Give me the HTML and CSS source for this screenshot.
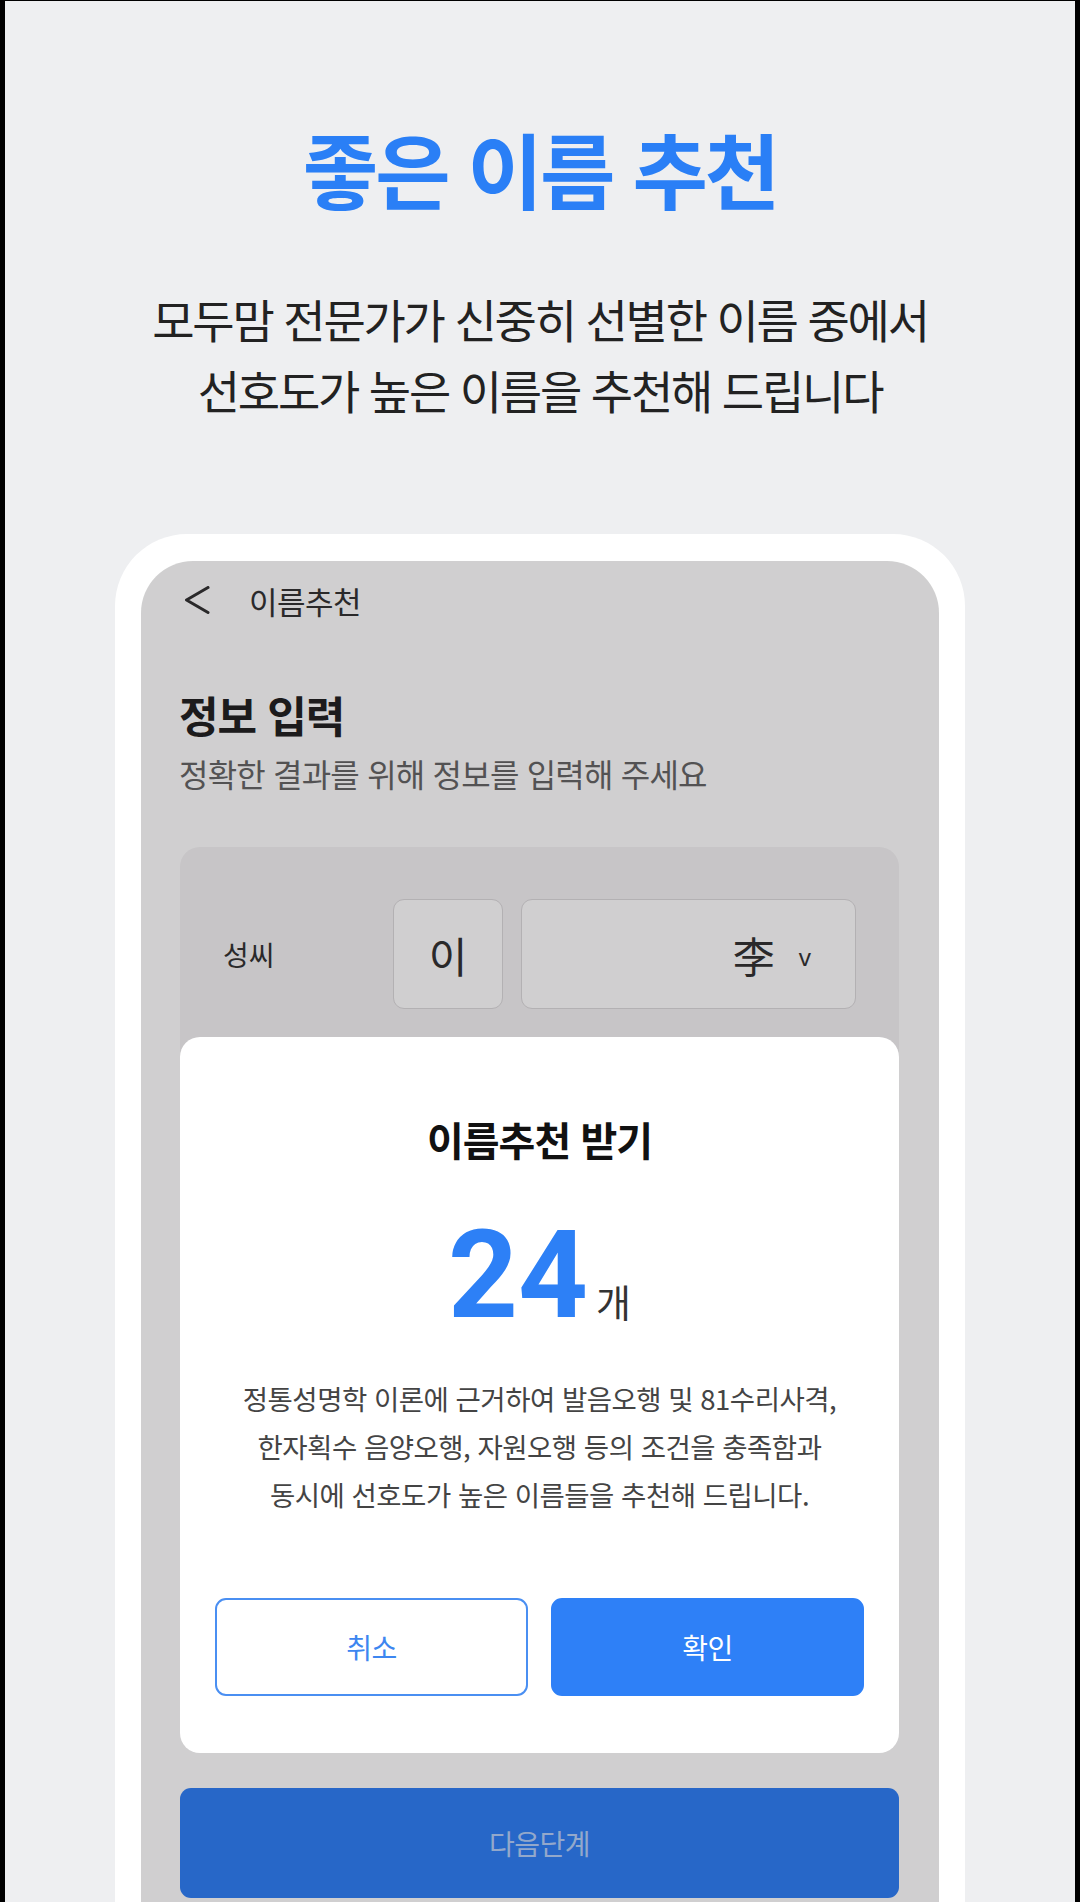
FILE: index.html
```html
<!DOCTYPE html>
<html lang="ko">
<head>
<meta charset="utf-8">
<title>좋은 이름 추천</title>
<link rel="stylesheet" href="styles.css">
</head>
<body>
<div class="page">
  <h1 class="hero-title">좋은 이름 추천</h1>
  <p class="hero-sub">모두맘 전문가가 신중히 선별한 이름 중에서<br>선호도가 높은 이름을 추천해 드립니다</p>
  <div class="phone">
    <div class="screen">
      <div class="appbar">
        <svg class="back-icon" viewBox="0 0 26 28" width="26" height="28" aria-hidden="true">
          <path d="M24 1.5 L2.5 14 L24 26.5" fill="none" stroke="#333" stroke-width="3" stroke-linecap="round" stroke-linejoin="round"/>
        </svg>
        <span class="appbar-title">이름추천</span>
      </div>
      <h2 class="sec-title">정보 입력</h2>
      <p class="sec-sub">정확한 결과를 위해 정보를 입력해 주세요</p>
      <div class="form-panel">
        <div class="form-row">
          <span class="form-label">성씨</span>
          <div class="field field-hangul">이</div>
          <div class="field field-hanja"><span class="hanja">李</span><span class="caret">v</span></div>
        </div>
      </div>
      <button class="btn-next" type="button">다음단계</button>
      <div class="dim"></div>
      <div class="modal">
        <h3 class="modal-title">이름추천 받기</h3>
        <div class="modal-count"><span class="count-num">24</span><span class="count-unit">개</span></div>
        <p class="modal-desc">정통성명학 이론에 근거하여 발음오행 및 81수리사격,<br>한자획수 음양오행, 자원오행 등의 조건을 충족함과<br>동시에 선호도가 높은 이름들을 추천해 드립니다.</p>
        <div class="modal-actions">
          <button class="btn btn-cancel" type="button">취소</button>
          <button class="btn btn-ok" type="button">확인</button>
        </div>
      </div>
    </div>
  </div>
</div>
</body>
</html>
```
FILE: styles.css
```css
* { box-sizing: border-box; }

html, body {
  margin: 0;
  padding: 0;
  background: #000;
}

body {
  font-family: "Noto Sans CJK KR", "Noto Sans", sans-serif;
}

.page {
  margin: 1px 5px 0 5px;
  height: 1901px;
  overflow: hidden;
  background: #eeeff1;
  padding-top: 117px;
}

.hero-title {
  margin: 0;
  text-align: center;
  font-size: 82px;
  line-height: 100px;
  font-weight: 700;
  letter-spacing: -3px;
  color: #2a7ff6;
}

.hero-sub {
  margin: 65px 0 0;
  text-align: center;
  font-size: 46px;
  line-height: 71px;
  font-weight: 400;
  letter-spacing: -2.2px;
  color: #222;
}

.phone {
  margin: 109px auto 0;
  width: 850px;
  height: 1400px;
  background: #fff;
  border-radius: 72px 72px 0 0;
  padding: 27px 26px 0;
}

.screen {
  position: relative;
  height: 100%;
  background: #fff;
  border-radius: 52px 52px 0 0;
  overflow: hidden;
}

.appbar {
  display: flex;
  align-items: center;
  gap: 39px;
  height: 54px;
  margin-top: 12px;
  padding-left: 43px;
}

.back-icon { display: block; }

.appbar-title {
  font-size: 31px;
  color: #333;
  letter-spacing: -0.5px;
}

.sec-title {
  margin: 61px 0 0 38px;
  font-size: 43px;
  line-height: 52px;
  font-weight: 700;
  color: #222;
  letter-spacing: -1px;
}

.sec-sub {
  margin: 13px 0 0 38px;
  font-size: 32px;
  line-height: 40px;
  letter-spacing: -0.8px;
  color: #666;
}

.form-panel {
  margin: 54px 40px 0 39px;
  height: 880px;
  background: #f4f3f4;
  border-radius: 20px;
  padding: 52px 43px 0;
}

.form-row {
  display: grid;
  grid-template-columns: 152px 110px 1fr;
  column-gap: 18px;
  align-items: center;
  height: 110px;
}

.form-label {
  font-size: 28px;
  color: #333;
}

.field {
  height: 110px;
  background: #fff;
  border: 1.5px solid #dcdadc;
  border-radius: 11px;
  display: flex;
  align-items: center;
  color: #333;
}

.field-hangul {
  justify-content: center;
  font-size: 42px;
}

.field-hanja {
  justify-content: flex-end;
  gap: 24px;
  padding-right: 44px;
}

.hanja { font-size: 42px; }

.caret {
  font-family: "Noto Sans", sans-serif;
  font-size: 24px;
  margin-top: 4px;
}

.btn-next {
  display: block;
  margin: 61px 0 0 39px;
  width: 719px;
  height: 110px;
  border: 0;
  border-radius: 11px;
  background: #2f7ff6;
  color: #b4cff9;
  font-family: inherit;
  font-size: 28px;
  letter-spacing: -0.5px;
}

.dim {
  position: absolute;
  inset: 0;
  background: rgba(4, 0, 4, 0.19);
  z-index: 1;
}

.modal {
  position: absolute;
  top: 476px;
  left: 39px;
  width: 719px;
  height: 716px;
  z-index: 2;
  background: #fff;
  border-radius: 20px;
  padding: 76px 35px 0;
  display: flex;
  flex-direction: column;
  align-items: center;
}

.modal-title {
  margin: 0;
  font-size: 40px;
  line-height: 52px;
  font-weight: 700;
  color: #111;
  letter-spacing: -1px;
}

.modal-count {
  margin-top: 51px;
  display: flex;
  align-items: baseline;
  justify-content: center;
  height: 120px;
}

.count-num {
  font-family: Roboto, "Noto Sans", sans-serif;
  font-weight: 700;
  font-size: 122px;
  line-height: 120px;
  color: #2d80f6;
}

.count-unit {
  font-size: 38px;
  color: #333;
  margin-left: 8px;
}

.modal-desc {
  margin: 38px 0 0;
  text-align: center;
  font-size: 27.5px;
  line-height: 48px;
  letter-spacing: -0.5px;
  color: #444;
}

.modal-actions {
  margin-top: 80px;
  width: 100%;
  display: grid;
  grid-template-columns: 1fr 1fr;
  column-gap: 23px;
}

.btn {
  height: 98px;
  border-radius: 11px;
  font-family: inherit;
  font-size: 28px;
  letter-spacing: -0.5px;
}

.btn-cancel {
  background: #fff;
  border: 2px solid #4a8ff2;
  color: #3d86f0;
}

.btn-ok {
  background: #2e80f7;
  border: 2px solid #2e80f7;
  color: #fff;
}
```
